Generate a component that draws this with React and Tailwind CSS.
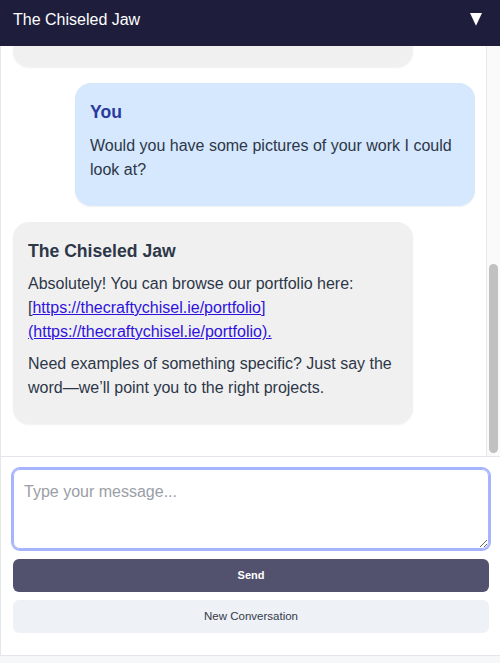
import React from "react";

const font = { fontFamily: '"Liberation Sans", Arial, Helvetica, sans-serif' };

function Bubble({ who, name, children }) {
  const isUser = who === "user";
  return (
    <div
      className={
        "w-[400px] shrink-0 rounded-2xl px-[15px] py-4 text-[16px] leading-[1.5] shadow-[0_1px_2px_rgba(0,0,0,0.06)] " +
        (isUser ? "self-end bg-[#d5e8fd]" : "self-start bg-[#f0f0f0]")
      }
    >
      <div
        className={
          "text-[17.6px] font-bold leading-[1.5] " +
          (isUser ? "text-[#2a3a9f]" : "text-[#2d3748]")
        }
      >
        {name}
      </div>
      <div className="text-[#2d3748]">{children}</div>
    </div>
  );
}

export default function App() {
  return (
    <div className="min-h-screen bg-[#f6f7f9]" style={font}>
      <div className="flex h-[656px] w-[500px] flex-col overflow-hidden border-b border-[#e3e6eb] bg-white">
        {/* Header */}
        <div className="flex h-[46px] shrink-0 items-start justify-between bg-[#1e1e3c] pl-[13px] pr-[18px] pt-[8px]">
          <div className="text-[16px] leading-[24px] text-white">The Chiseled Jaw</div>
          <svg width="12" height="13" viewBox="0 0 12 13" className="mt-[5px]">
            <polygon points="0,0 12,0 6,12.7" fill="#ffffff" />
          </svg>
        </div>

        {/* Messages */}
        <div className="flex min-h-0 flex-1 border-l border-[#e6e8eb]">
          <div className="flex min-w-0 flex-1 flex-col justify-end gap-4 overflow-hidden pb-8 pl-3 pr-[11px]">
            <Bubble who="bot" name="The Chiseled Jaw">
              <p className="my-2">
                Hi there! Welcome to The Chiseled Jaw. We craft bespoke
                woodwork, furniture and carvings. How can we help you today?
              </p>
            </Bubble>
            <Bubble who="user" name="You">
              <p className="my-2">Would you have some pictures of your work I could look at?</p>
            </Bubble>
            <Bubble who="bot" name="The Chiseled Jaw">
              <p className="my-2">
                Absolutely! You can browse our portfolio here: [
                <a href="#" className="text-[#2f12dc] underline">
                  https://thecraftychisel.ie/portfolio](https://thecraftychisel.ie/portfolio).
                </a>
              </p>
              <p className="my-2">
                Need examples of something specific? Just say the word—we’ll point you to the right projects.
              </p>
            </Bubble>
          </div>
          {/* scrollbar */}
          <div className="flex w-[14px] shrink-0 flex-col justify-end border-l border-[#e8e8e8] bg-[#fafafa] pb-[3px]">
            <div className="mx-auto h-[189px] w-[9px] rounded-full bg-[#c1c1c1]" />
          </div>
        </div>

        {/* Input area */}
        <div className="flex shrink-0 flex-col border-l border-t border-[#e3e6eb] pb-[22px] pl-3 pr-[11px] pt-3">
          <textarea
            autoFocus
            placeholder="Type your message..."
            className="h-[80px] w-full resize-y rounded-[7px] border border-[#a5b4fc] px-[10px] py-[10px] text-[16px] leading-[1.5] text-[#2d3748] outline-none ring-2 ring-[#a5b4fc] placeholder:text-[#9a9ea6]"
            style={font}
          />
          <button className="mt-[10px] h-[33px] w-full rounded-[6px] bg-[#52526e] text-[11px] font-bold text-white">
            Send
          </button>
          <button className="mt-2 h-[33px] w-full rounded-[6px] bg-[#eef1f6] text-[11.5px] text-[#343a48]">
            New Conversation
          </button>
        </div>
      </div>
    </div>
  );
}
